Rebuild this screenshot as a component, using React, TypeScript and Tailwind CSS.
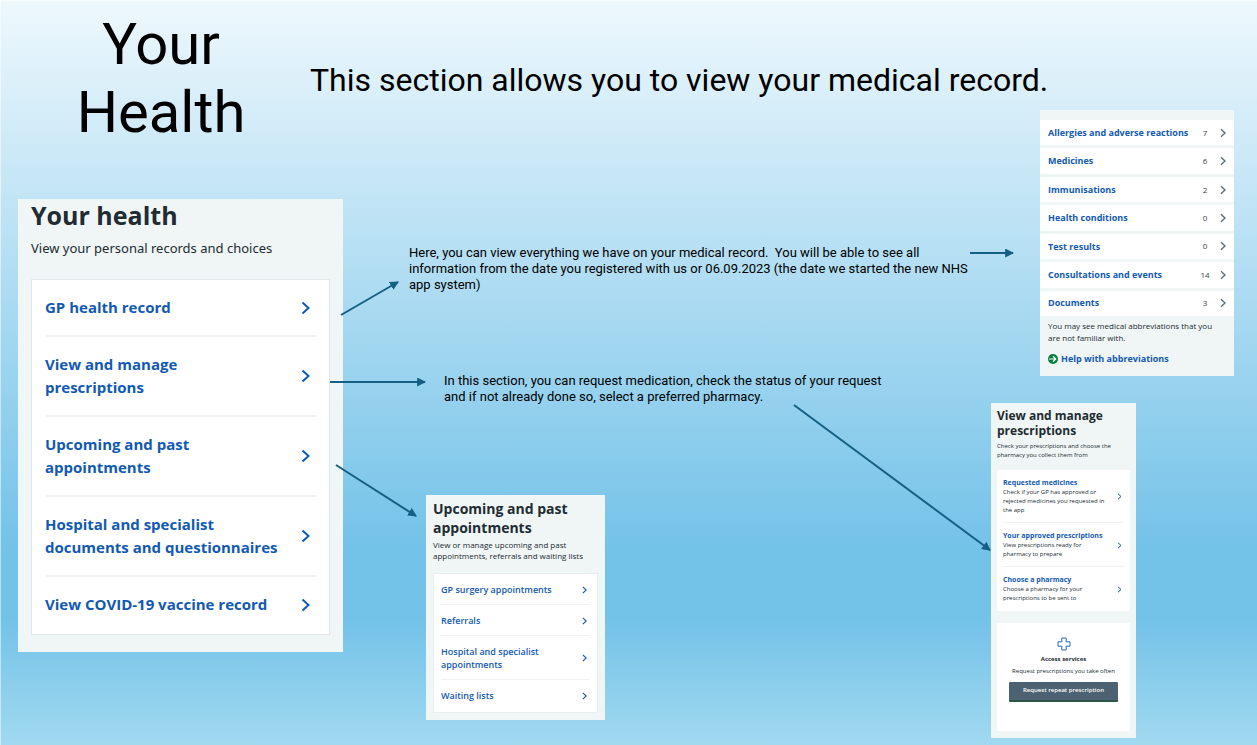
import type { ReactNode } from "react";

type RecordItem = {
  label: string;
  count: number;
};

type PrescriptionItem = {
  title: string;
  text: string;
};

const healthLinks = [
  "GP health record",
  "View and manage\nprescriptions",
  "Upcoming and past\nappointments",
  "Hospital and specialist\ndocuments and questionnaires",
  "View COVID-19 vaccine record",
];

const recordItems: RecordItem[] = [
  { label: "Allergies and adverse reactions", count: 7 },
  { label: "Medicines", count: 6 },
  { label: "Immunisations", count: 2 },
  { label: "Health conditions", count: 0 },
  { label: "Test results", count: 0 },
  { label: "Consultations and events", count: 14 },
  { label: "Documents", count: 3 },
];

const appointmentLinks = [
  "GP surgery appointments",
  "Referrals",
  "Hospital and specialist appointments",
  "Waiting lists",
];

const prescriptionItems: PrescriptionItem[] = [
  {
    title: "Requested medicines",
    text: "Check if your GP has approved or rejected medicines you requested in the app",
  },
  {
    title: "Your approved prescriptions",
    text: "View prescriptions ready for pharmacy to prepare",
  },
  {
    title: "Choose a pharmacy",
    text: "Choose a pharmacy for your prescriptions to be sent to",
  },
];

function App() {
  return (
    <main className="relative flex min-h-screen border-l border-t border-white/50 bg-[linear-gradient(to_bottom,#eef8fd_0%,#73c2e8_74%,#73c2e8_83%,#a1d9f0_100%)] bg-origin-border font-['Roboto',sans-serif] text-black">
      <div className="w-[309px] shrink-0 pl-[17px]">
        <h1 className="w-[286px] pt-[9px] text-center text-[58px] leading-[68px]">
          Your
          <br />
          Health
        </h1>
        <HealthPanel />
      </div>

      <div className="min-w-0 flex-1">
        <p className="pt-[59px] text-[32px] leading-[40px] whitespace-nowrap">
          This section allows you to view your medical record.
        </p>
        <Note className="mt-[145px] ml-[99px] w-[560px]">
          Here, you can view everything we have on your medical record.&nbsp; You will be able to see all
          information from the date you registered with us or 06.09.2023 (the date we started the new NHS
          app system)
        </Note>
        <Note className="mt-[80px] ml-[134px] w-[440px]">
          In this section, you can request medication, check the status of your request and if not
          already done so, select a preferred pharmacy.
        </Note>
        <AppointmentsPanel />
      </div>

      <div className="w-[266px] shrink-0 pt-[109px]">
        <RecordPanel />
        <PrescriptionsPanel />
      </div>

      <Arrows />
    </main>
  );
}

function Note({ className, children }: { className: string; children: ReactNode }) {
  return <p className={`text-[13px] leading-[16px] ${className}`}>{children}</p>;
}

function HealthPanel() {
  return (
    <section className="mt-[53px] w-[325px] bg-[#f0f5f5] px-[13px] pb-[17px] font-['Open_Sans',sans-serif] text-[#212b32]">
      <h2 className="text-[25px] leading-[32px] font-bold">Your health</h2>
      <p className="mt-[7px] font-['Noto_Sans',sans-serif] text-[13px] leading-[20px]">
        View your personal records and choices
      </p>
      <nav className="mt-[21px] border border-[#e3e8ea] bg-white px-[13px]">
        {healthLinks.map((label) => (
          <a
            key={label}
            href="#"
            className="flex items-center justify-between border-b-2 border-[#eff1f3] py-4 text-[15px] leading-[23px] font-bold text-[#1259b3] last:border-transparent"
          >
            <span className="whitespace-pre-line">{label}</span>
            <Chevron className="mr-[6px] h-[14px] w-[9px]" />
          </a>
        ))}
      </nav>
    </section>
  );
}

function AppointmentsPanel() {
  return (
    <section className="mt-[90px] ml-[116px] w-[179px] bg-[#f0f5f5] px-[7px] pt-1 pb-[7px] font-['Open_Sans',sans-serif] text-[#212b32]">
      <h2 className="text-[14px] leading-[19px] font-bold">Upcoming and past appointments</h2>
      <p className="mt-[2px] text-[8px] leading-[11px]">
        View or manage upcoming and past appointments, referrals and waiting lists
      </p>
      <nav className="mt-[12px] border border-[#e9eeef] bg-white px-[7px] pb-px">
        {appointmentLinks.map((label) => (
          <a
            key={label}
            href="#"
            className="flex items-center justify-between border-b border-[#eff1f3] pt-[9px] pb-2 text-[9px] leading-[13px] font-semibold text-[#1259b3] last:border-transparent"
          >
            <span className="w-[120px]">{label}</span>
            <Chevron className="mr-[3px] h-[8px] w-[5px]" />
          </a>
        ))}
      </nav>
    </section>
  );
}

function RecordPanel() {
  return (
    <section className="ml-[49px] w-[194px] bg-[#f0f5f5] pt-[10px] pb-[10px] font-['Open_Sans',sans-serif] text-[#212b32]">
      <nav className="flex h-[196px] flex-col gap-[3px]">
        {recordItems.map((item) => (
          <a key={item.label} href="#" className="flex flex-1 items-center bg-white px-[8px]">
            <span className="flex-1 text-[9px] font-bold whitespace-nowrap text-[#1259b3]">
              {item.label}
            </span>
            <span className="w-[16px] text-center text-[8px] text-[#37424a]">{item.count}</span>
            <Chevron className="ml-[7px] h-[10px] w-[6px] text-[#5b6b78]" />
          </a>
        ))}
      </nav>
      <p className="mt-[4px] px-[8px] text-[8px] leading-[12px]">
        You may see medical abbreviations that you are not familiar with.
      </p>
      <a href="#" className="mt-[8px] flex items-center gap-[3px] px-[8px] text-[9px] leading-[14px] font-bold text-[#1259b3]">
        <ArrowCircle />
        Help with abbreviations
      </a>
    </section>
  );
}

function PrescriptionsPanel() {
  return (
    <section className="mt-[27px] w-[145px] bg-[#f0f5f5] px-[6px] pt-[5px] pb-[7px] font-['Open_Sans',sans-serif] text-[#212b32]">
      <h2 className="text-[12px] leading-[15px] font-bold">View and manage prescriptions</h2>
      <p className="mt-[4px] text-[6px] leading-[9px]">
        Check your prescriptions and choose the pharmacy you collect them from
      </p>
      <nav className="mt-[10px] bg-white px-[6px]">
        {prescriptionItems.map((item) => (
          <a
            key={item.title}
            href="#"
            className="flex items-center justify-between border-b border-[#eff1f3] pt-2 pb-[7px] text-[6px] leading-[9px] last:border-transparent"
          >
            <span className="w-[106px]">
              <span className="block text-[7px] leading-[10px] font-bold text-[#1259b3]">
                {item.title}
              </span>
              <span className="block">{item.text}</span>
            </span>
            <Chevron className="mr-[2px] h-[7px] w-[5px] text-[#1259b3]" />
          </a>
        ))}
      </nav>

      <div className="mt-[12px] flex flex-col items-center bg-white pt-[14px] pb-[29px] text-[6px] leading-[9px]">
        <Cross />
        <h3 className="mt-[4px] font-bold">Access services</h3>
        <p className="mt-[3px]">Request prescriptions you take often</p>
        <button
          type="button"
          className="mt-[6px] w-[109px] rounded-[1px] border-b-2 border-[#2c5545] bg-[#4c6272] pt-[4px] pb-[5px] font-semibold text-white"
        >
          Request repeat prescription
        </button>
      </div>
    </section>
  );
}

function Chevron({ className }: { className: string }) {
  return (
    <svg viewBox="0 0 9 14" fill="none" stroke="currentColor" strokeWidth="2" className={`shrink-0 ${className}`}>
      <path d="M1.5 1.5 L7.5 7 L1.5 12.5" />
    </svg>
  );
}

function ArrowCircle() {
  return (
    <svg viewBox="0 0 20 20" className="h-[10px] w-[10px] shrink-0">
      <circle cx="10" cy="10" r="10" fill="#007f3b" />
      <path d="M2 10 H15 M10 4.5 L15.5 10 L10 15.5" fill="none" stroke="#fff" strokeWidth="2.4" />
    </svg>
  );
}

function Cross() {
  return (
    <svg viewBox="0 0 14 14" className="h-[14px] w-[14px]" fill="none" stroke="#1f67bd" strokeLinejoin="round">
      <path d="M4.8 1 H9.2 V4.8 H13 V9.2 H9.2 V13 H4.8 V9.2 H1 V4.8 H4.8 Z" />
    </svg>
  );
}

// connectors between the panels and the notes
function Arrows() {
  return (
    <svg className="pointer-events-none absolute top-0 left-0 h-full w-full" fill="none" stroke="#156082" strokeWidth="2">
      <defs>
        <marker id="head" viewBox="0 0 8 8" refX="7" refY="4" markerWidth="9" markerHeight="9" markerUnits="userSpaceOnUse" orient="auto">
          <path d="M0 0 L8 4 L0 8 Z" fill="#156082" stroke="none" />
        </marker>
      </defs>
      <path d="M340 314 L397 281" markerEnd="url(#head)" />
      <path d="M329 381 H424" markerEnd="url(#head)" />
      <path d="M335 464 L415 515" markerEnd="url(#head)" />
      <path d="M969 252 H1012" markerEnd="url(#head)" />
      <path d="M793 404 L989 549" markerEnd="url(#head)" />
    </svg>
  );
}

export default App;
